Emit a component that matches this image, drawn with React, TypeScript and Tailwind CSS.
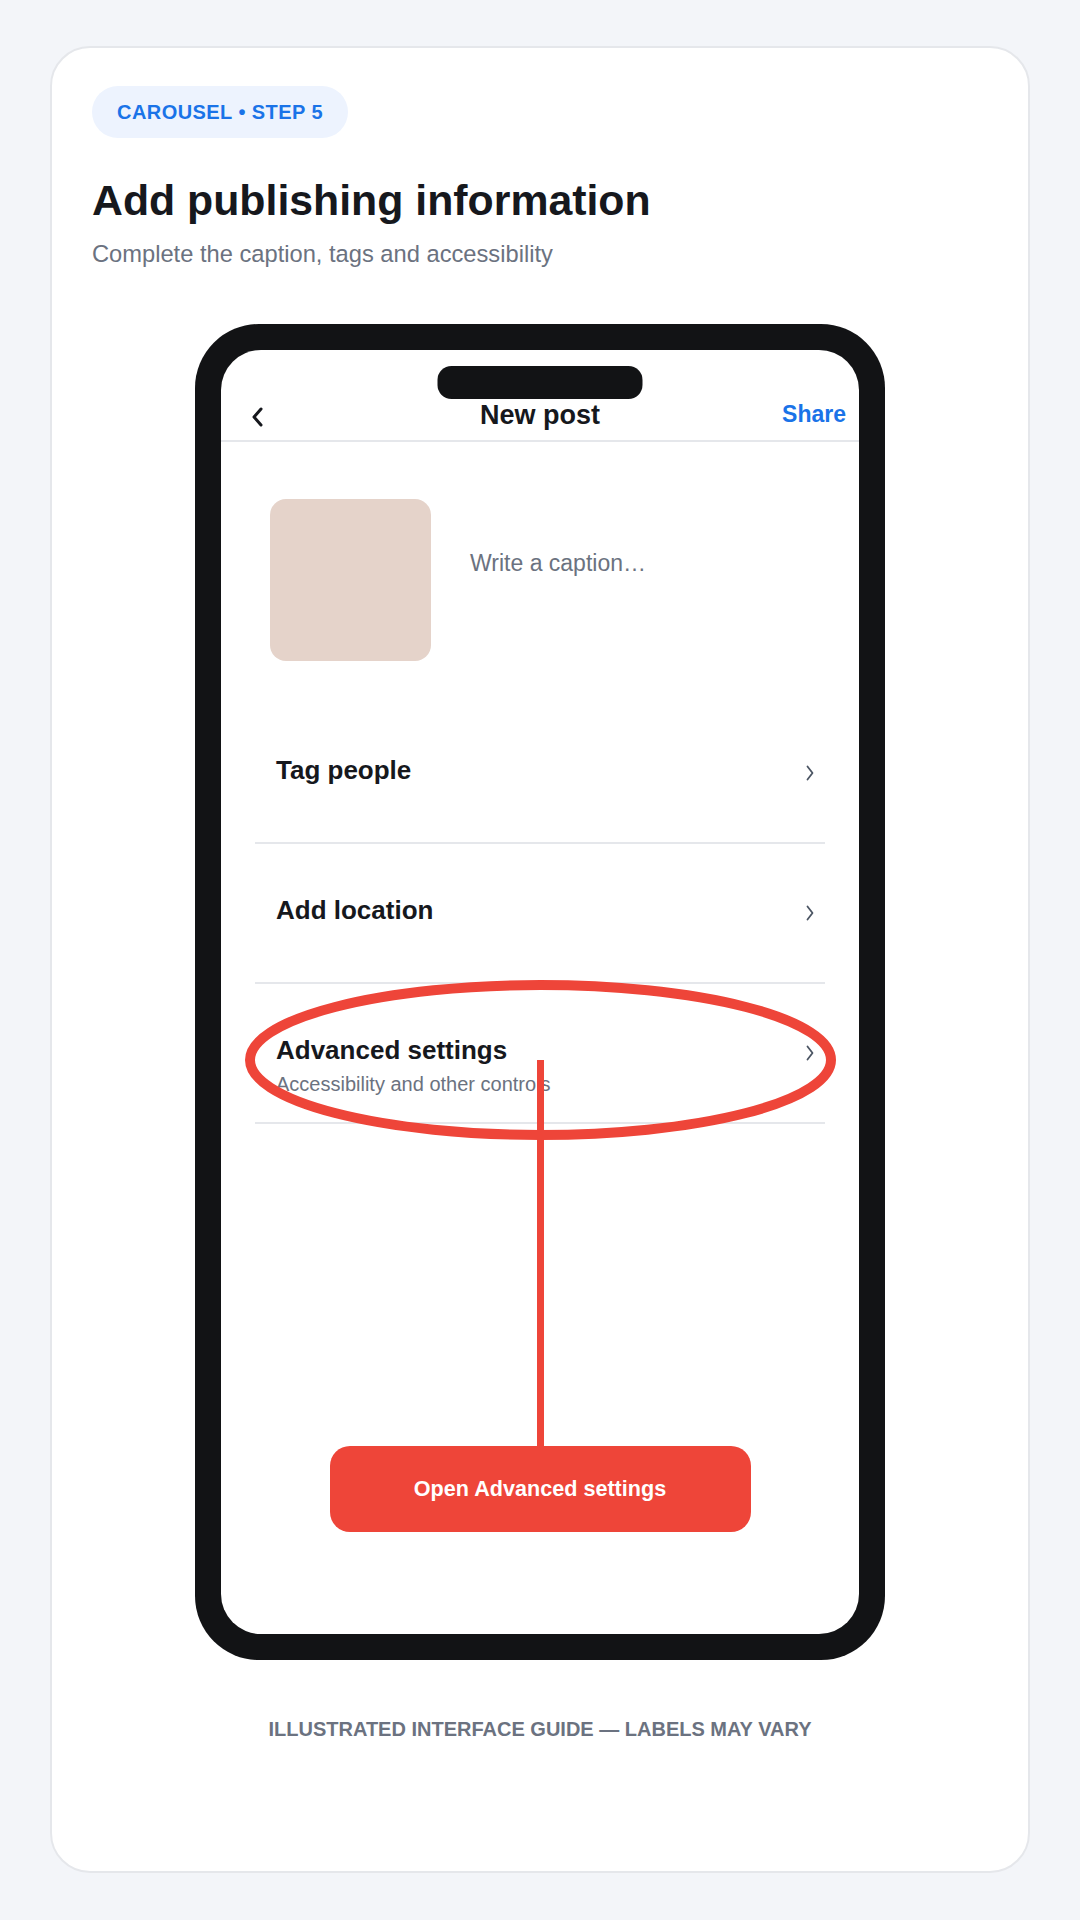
import React from "react";

const font = { fontFamily: '"Liberation Sans", Arial, Helvetica, sans-serif' };

function RowChevron() {
  return (
    <svg width="10" height="16" viewBox="0 0 10 16" fill="none" aria-hidden>
      <path d="M2.5 1.5 L7.5 8 L2.5 14.5" stroke="#4b5563" strokeWidth="1.8" strokeLinecap="round" strokeLinejoin="round" />
    </svg>
  );
}

function BackChevron() {
  return (
    <svg width="14" height="20" viewBox="0 0 14 20" fill="none" aria-hidden>
      <path d="M11 2 L4 10 L11 18" stroke="#16181d" strokeWidth="3" strokeLinecap="round" strokeLinejoin="round" />
    </svg>
  );
}

type RowProps = { title: string; subtitle?: string };

function SettingsRow({ title, subtitle }: RowProps) {
  return (
    <div className="h-[140px] border-b-2 border-[#e5e7eb] pl-[21px] pr-[10px] pt-[51px] flex items-start justify-between">
      <div className="flex flex-col">
        <div className="text-[26px] leading-[31px] font-bold text-[#16181d]">{title}</div>
        {subtitle && (
          <div className="mt-[6px] text-[20px] leading-[24px] text-[#6b7280]">{subtitle}</div>
        )}
      </div>
      <div className="h-[31px] mt-[2px] flex items-center">
        <RowChevron />
      </div>
    </div>
  );
}

export default function App() {
  return (
    <div className="min-h-[1920px] bg-[#f3f5f9] px-[50px] py-[46px]" style={font}>
      <div className="h-[1827px] rounded-[40px] border-2 border-[#e5e7eb] bg-white px-[40px] pt-[38px] flex flex-col">
        <div className="self-start inline-flex h-[52px] items-center rounded-full bg-[#edf3fe] px-[25px] text-[20px] font-bold tracking-[0.022em] text-[#1a73e8]">
          CAROUSEL • STEP 5
        </div>
        <h1 className="mt-[37px] text-[42.8px] leading-[50px] font-bold text-[#16181d]">
          Add publishing information
        </h1>
        <p className="mt-[12px] text-[23.7px] leading-[34px] text-[#6b7280]">
          Complete the caption, tags and accessibility
        </p>

        {/* phone frame */}
        <div className="mt-[53px] self-center w-[690px] h-[1336px] rounded-[64px] bg-[#121315] p-[26px]">
          <div className="relative h-full rounded-[40px] bg-white overflow-hidden flex flex-col">
            {/* dynamic island */}
            <div className="absolute left-1/2 top-[16px] h-[33px] w-[205px] -translate-x-1/2 rounded-[14px] bg-[#121315]" />

            {/* navigation bar */}
            <div className="h-[92px] shrink-0 border-b-2 border-[#e5e7eb] px-[13px] pt-[49px] grid grid-cols-[1fr_auto_1fr] items-start">
              <div className="pl-[16px] pt-[3px] flex items-center h-[32px]">
                <BackChevron />
              </div>
              <div className="text-[27px] leading-[32px] font-bold text-[#16181d]">New post</div>
              <div className="text-right text-[23px] leading-[30px] font-bold text-[#1a73e8]">Share</div>
            </div>

            {/* media + caption */}
            <div className="pt-[57px] pl-[49px] flex items-start">
              <div className="w-[161px] h-[162px] rounded-[16px] bg-[#e5d3ca]" />
              <div className="ml-[39px] mt-[50px] text-[23px] leading-[28px] text-[#6b7280]">
                Write a caption…
              </div>
            </div>

            {/* settings list */}
            <div className="mt-[43px] mx-[34px] flex flex-col">
              <SettingsRow title="Tag people" />
              <SettingsRow title="Add location" />
              <SettingsRow title="Advanced settings" subtitle="Accessibility and other controls" />
            </div>

            {/* call-to-action */}
            <div className="mt-auto mb-[102px] flex justify-center">
              <div className="w-[421px] h-[86px] rounded-[20px] bg-[#ee4539] flex items-center justify-center text-[21.6px] font-bold text-white">
                Open Advanced settings
              </div>
            </div>

            {/* highlight ring around the advanced settings row */}
            <svg
              className="absolute left-[24px] top-[630px] pointer-events-none"
              width="591"
              height="160"
              viewBox="0 0 591 160"
              fill="none"
            >
              <ellipse cx="295.5" cy="80" rx="290.5" ry="75" stroke="#ee4539" strokeWidth="10" />
            </svg>
            {/* connector from the ring to the button */}
            <div className="absolute left-[316px] top-[710px] h-[387px] w-[7px] bg-[#ee4539]" />
          </div>
        </div>

        <div className="mt-[57px] text-center text-[20px] leading-[24px] font-bold text-[#6b7280]">
          ILLUSTRATED INTERFACE GUIDE — LABELS MAY VARY
        </div>
      </div>
    </div>
  );
}
